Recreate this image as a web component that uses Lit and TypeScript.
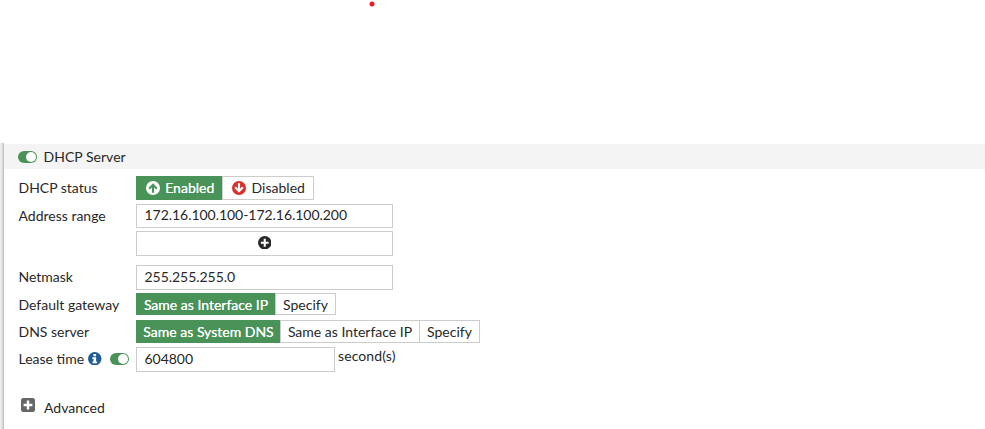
import { LitElement, html, css, svg } from "lit";
import { customElement, property } from "lit/decorators.js";

const up = svg`<path d="M8 13.4V4.6M3.6 8.8 8 4.4l4.4 4.4" fill="none" stroke="#4a9358" stroke-width="2.4"/>`;
const down = svg`<path d="M8 2.6v8.8M3.6 7.2 8 11.6l4.4-4.4" fill="none" stroke="#fff" stroke-width="2.4"/>`;
const plus = svg`<path d="M8 3.4v9.2M3.4 8h9.2" fill="none" stroke="#fff" stroke-width="2.5"/>`;
const info = svg`<path d="M6.4 2.3h3.2v2.6H6.4zM5.2 6.1h4.4v5.1h1.3v2.1H5.2v-2.1h1.3V8.2H5.2z" fill="#fff"/>`;

const disc = (color: string, glyph: unknown, cls = "") => html`
  <svg class="disc ${cls}" viewBox="0 0 16 16"><circle cx="8" cy="8" r="8" fill=${color}></circle>${glyph}</svg>`;

@customElement("toggle-switch")
class ToggleSwitch extends LitElement {
  static styles = css`
    :host { display: block; width: 19px; height: 12px; flex: none; }
    svg { display: block; }
  `;
  render() {
    return html`<svg width="19" height="12" viewBox="0 0 19 12">
      <rect width="19" height="12" rx="6" fill="#4a9358"></rect>
      <circle cx="13" cy="6" r="5" fill="#fff"></circle>
    </svg>`;
  }
}

@customElement("form-row")
class FormRow extends LitElement {
  @property() label = "";
  static styles = css`
    :host { display: flex; align-items: center; margin-left: 14.5px; }
    .label { display: flex; align-items: center; width: 117.5px; flex: none; white-space: nowrap; }
    .label span { padding-bottom: var(--lift, 0px); padding-top: var(--drop, 0px); }
  `;
  render() {
    return html`<div class="label"><span>${this.label}</span><slot name="extra"></slot></div><slot></slot>`;
  }
}

@customElement("app-root")
class AppRoot extends LitElement {
  static styles = css`
    :host {
      display: flex; flex-direction: column; position: relative; box-sizing: border-box;
      height: 429px; padding-top: 143px; overflow: hidden; background: #fff;
      font: 14px/20px Lato, sans-serif; color: #282828;
    }
    .mark { position: absolute; left: 369px; top: 1px; width: 6px; height: 6px; }
    .panel {
      flex: 1; padding: 1px 0 0 4px; display: flex; flex-direction: column;
      background: linear-gradient(to right, #ededed 0 1px, #e6e6e6 1px 2px, #d8d8d8 2px 3px, #c4c4c4 3px 4px, #fff 4px);
    }
    .head {
      display: flex; align-items: flex-start; gap: 6.5px; height: 25px; box-sizing: border-box;
      padding: 3px 0 0 14px; background: #f4f4f4; margin-bottom: 7px;
    }
    .head toggle-switch { margin-top: 4px; }
    .head span { letter-spacing: 0.03px; }
    .lift { --lift: 2px; }
    .drop { --drop: 2px; }
    .s24 { height: 24px; } .s22 { height: 22px; } .s23 { height: 23px; } .s25 { height: 25px; }
    .g3 { margin-bottom: 3px; } .g4 { margin-bottom: 4px; } .g5 { margin-bottom: 5px; } .g9 { margin-bottom: 9px; }
    .seg { display: flex; height: 100%; }
    .opt {
      display: flex; align-items: center; justify-content: center; box-sizing: border-box; white-space: nowrap;
      border: 1px solid #ccc; border-left: 0;
    }
    .drop .opt { padding-top: 2px; }
    .on { background: #4a9358; border-color: #4a9358; color: #fff; text-shadow: 0 0 0.6px #fff; padding-left: 2px; }
    .on + .opt { border-left: 1px solid #ccc; }
    .w86 { width: 86px; padding-left: 3px; } .w92 { width: 92px; padding-left: 1px; } .w139 { width: 139px; } .w61 { width: 61px; }
    .w144 { width: 144px; } .w140 { width: 140px; } .w60 { width: 60px; }
    .box {
      box-sizing: border-box; width: 257px; height: 100%; border: 1px solid #ccc; padding: 0 0 1px 7.5px;
      display: flex; align-items: center; letter-spacing: -0.04px;
    }
    .short { width: 199px; }
    .raised { padding-bottom: 2px; }
    .add { justify-content: center; padding: 0 0 2px; }
    .disc { width: 14px; height: 14px; flex: none; display: block; }
    .lead { margin: -1px 5.5px 0 0; }
    .small { width: 13.5px; height: 13.5px; }
    .info { margin: -2px 8px 0 4px; }
    .lease-toggle { margin-bottom: 2px; }
    .unit { align-self: flex-start; margin: -1px 0 0 3px; letter-spacing: 0.1px; }
    .advanced { display: flex; align-items: center; gap: 9px; margin: 26px 0 0 17px; height: 20px; }
    .square { width: 14px; height: 14px; margin-top: -6px; }
  `;
  render() {
    return html`
      <svg class="mark" viewBox="0 0 6 6"><circle cx="3" cy="3" r="2.5" fill="#ed1c24"></circle></svg>
      <div class="panel">
        <div class="head"><toggle-switch></toggle-switch><span>DHCP Server</span></div>
        <form-row class="s24 g4" label="DHCP status">
          <div class="seg">
            <div class="opt on w86">${disc("#fff", up, "lead")}Enabled</div>
            <div class="opt w92">${disc("#d9302c", down, "lead")}Disabled</div>
          </div>
        </form-row>
        <form-row class="s24 g3" label="Address range"><div class="box raised">172.16.100.100-172.16.100.200</div></form-row>
        <form-row class="s25 g9"><div class="box add">${disc("#282828", plus, "small")}</div></form-row>
        <form-row class="s25 g3 lift" label="Netmask"><div class="box">255.255.255.0</div></form-row>
        <form-row class="s22 g5 drop" label="Default gateway">
          <div class="seg"><div class="opt on w139">Same as Interface IP</div><div class="opt w61">Specify</div></div>
        </form-row>
        <form-row class="s23 g4" label="DNS server">
          <div class="seg">
            <div class="opt on w144">Same as System DNS</div>
            <div class="opt w140">Same as Interface IP</div>
            <div class="opt w60">Specify</div>
          </div>
        </form-row>
        <form-row class="s25 lift" label="Lease time">
          <svg slot="extra" class="disc small info" viewBox="0 0 16 16"><circle cx="8" cy="8" r="8" fill="#1d5c99"></circle>${info}</svg>
          <toggle-switch class="lease-toggle" slot="extra"></toggle-switch>
          <div class="box short">604800</div><span class="unit">second(s)</span>
        </form-row>
        <div class="advanced">
          <svg class="square" viewBox="0 0 14 14"><rect width="14" height="14" rx="2.5" fill="#666"></rect><path d="M7 2.6v8.8M2.6 7h8.8" stroke="#fff" stroke-width="2.4"></path></svg>
          <span>Advanced</span>
        </div>
      </div>`;
  }
}
